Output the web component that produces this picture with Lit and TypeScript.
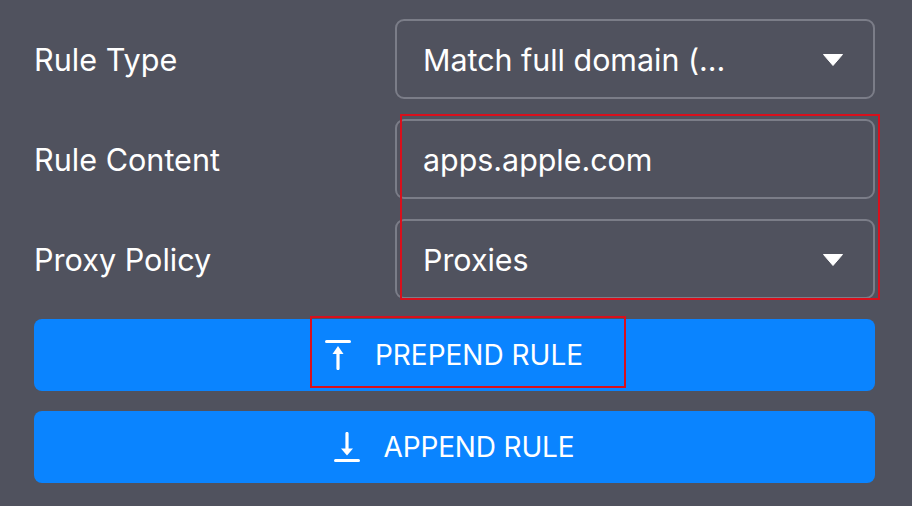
import { LitElement, html, css } from "lit";
import { customElement } from "lit/decorators.js";

@customElement("app-root")
export class AppRoot extends LitElement {
  static styles = css`
    :host { display: block; width: 912px; height: 506px; background: #50525e; font-family: Inter, "Liberation Sans", sans-serif; color: #fff; position: relative; overflow: hidden; }
    .wrap { display: flex; flex-direction: column; padding: 19px 37px 0 34px; }
    .row { display: flex; align-items: center; height: 80px; margin-bottom: 20px; }
    .label { width: 361px; font-size: 30.6px; }
    .field { width: 480px; height: 80px; box-sizing: border-box; border: 2px solid #7b7d88; border-radius: 9px; display: flex; align-items: center; justify-content: space-between; padding: 2px 29px 0 26px; font-size: 30.4px; }
    .caret { display: block; }
    .btn { height: 72px; background: #0a84ff; border-radius: 8px; display: flex; align-items: center; justify-content: center; gap: 24px; font-size: 28px; font-weight: 400; margin-bottom: 20px; padding-right: 1px; }
    .btn.append { letter-spacing: -0.15px; }
    .mark { position: absolute; border: 2px solid #d8101c; box-sizing: border-box; pointer-events: none; }
    .m1 { left: 400px; top: 114px; width: 480px; height: 186px; }
    .m2 { left: 310px; top: 316px; width: 316px; height: 72px; }
  `;
  caret() {
    return html`<svg class="caret" width="22" height="12" viewBox="0 0 22 12"><path d="M1.5 0.5H20.5L11 11.5Z" fill="#fff" stroke="#fff" stroke-width="1" stroke-linejoin="round"/></svg>`;
  }
  render() {
    return html`
      <div class="wrap">
        <div class="row"><div class="label">Rule Type</div><div class="field"><span>Match full domain (...</span>${this.caret()}</div></div>
        <div class="row"><div class="label">Rule Content</div><div class="field"><span>apps.apple.com</span></div></div>
        <div class="row"><div class="label">Proxy Policy</div><div class="field"><span>Proxies</span>${this.caret()}</div></div>
        <div class="btn"><svg width="26" height="30" viewBox="0 0 26 30"><rect x="0" y="0" width="26" height="3" rx="1.5" fill="#fff"/><path d="M13 6L18.5 14H14.6V28.5A1.6 1.6 0 0 1 11.4 28.5V14H7.5Z" fill="#fff"/></svg><span>PREPEND RULE</span></div>
        <div class="btn append"><svg width="26" height="30" viewBox="0 0 26 30"><rect x="0" y="27" width="26" height="3" rx="1.5" fill="#fff"/><path d="M13 23.5L7 16.5H11.4V1.5A1.6 1.6 0 0 1 14.6 1.5V16.5H19Z" fill="#fff"/></svg><span>APPEND RULE</span></div>
      </div>
      <div class="mark m1"></div>
      <div class="mark m2"></div>
    `;
  }
}
